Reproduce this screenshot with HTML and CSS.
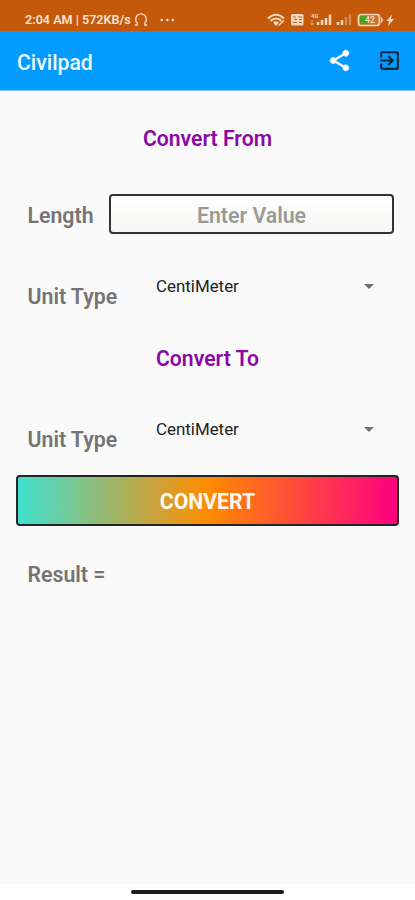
FILE: index.html
```html
<!DOCTYPE html>
<html lang="en">
<head>
<meta charset="utf-8">
<title>Civilpad</title>
<link rel="stylesheet" href="styles.css">
</head>
<body>
<div class="screen">
  <div class="status">
    <span class="clock">2:04 AM | 572KB/s</span>
    <svg class="headset" width="14" height="14" viewBox="0 0 14 14" fill="none" stroke="currentColor" stroke-width="1.3"><path d="M3.2 12V10L1.800 8V6a5.200 5.200 0 0 1 10.400 0v2L10.800 10v2M.8 12h3M10.200 12h3"/></svg>
    <svg class="more" width="15" height="4" viewBox="0 0 15 4" fill="currentColor"><circle cx="1.8" cy="2" r="1.3"/><circle cx="7.3" cy="2" r="1.3"/><circle cx="12.8" cy="2" r="1.3"/></svg>
    <svg class="system" width="130" height="16" viewBox="0 0 130 16">
      <g fill="none" stroke="#f7d8bd" stroke-width="2"><path d="M1 6.500q8-7.500 16 0M3.500 9q5.500-5 11 0"/></g>
      <path d="M6 10.500q3-2.500 6 0l-3 3.500z" fill="#f7d8bd"/><path d="M11.500 13.500l5.500-5" stroke="#f7d8bd" stroke-width="1.500"/>
      <rect x="24" y="2" width="12.500" height="11.500" rx="1.500" fill="#f7d8bd"/>
      <path d="M26 5h3M31 5h4M27 7.500h3M32 7.500h3M26 10.500h4M32 10.500h3" stroke="#b5642e" stroke-width="1.200"/>
      <text x="44" y="6" class="net">4G</text>
      <path d="M45 8v5M43.500 11l1.500 2 1.500-2" stroke="#e3a577" fill="none"/>
      <path d="M51 13v-3M55 13v-5M59 13V6M63 13V2.500" stroke="#f7d8bd" stroke-width="2.500"/>
      <path d="M71 13v-3M75 13v-5" stroke="#f7d8bd" stroke-width="2.500"/>
      <path d="M79 13V5M83 13V2.500" stroke="#d38b58" stroke-width="2.300"/>
      <rect x="91.500" y="2.500" width="21" height="11" rx="2.500" fill="#c2732f" stroke="#f7d8bd" stroke-width="1.700"/>
      <rect x="93" y="4" width="9" height="8" rx="1" fill="#48a51e"/><path d="M114 5q4 3 0 6z" fill="#f7d8bd"/>
      <text x="98" y="11" class="charge">42</text>
      <path d="M125 2.500l-5.500 6.500h2.500l-1 5 6-7h-3z" fill="#f7d8bd"/>
    </svg>
  </div>
  <header class="appbar">
    <h1>Civilpad</h1>
    <svg class="share" width="25" height="25" viewBox="0 0 24 24" fill="#fff"><path d="M18 16.080c-.76 0-1.440.3-1.960.77L8.910 12.700c.05-.23.09-.46.09-.7s-.04-.47-.09-.7l7.050-4.110c.54.5 1.250.81 2.040.81 1.660 0 3-1.340 3-3s-1.340-3-3-3-3 1.340-3 3c0 .24.04.47.09.7L8.040 9.810C7.500 9.310 6.790 9 6 9c-1.660 0-3 1.340-3 3s1.340 3 3 3c.79 0 1.500-.31 2.040-.81l7.120 4.160c-.05.21-.08.43-.08.65 0 1.610 1.310 2.920 2.920 2.920s2.920-1.310 2.920-2.920-1.310-2.920-2.920-2.920z" stroke="#fff" stroke-width=".5"/></svg>
    <svg class="exit" width="25" height="25" viewBox="0 0 24 24" fill="#08243c"><path d="M10.090 15.590L11.500 17l5-5-5-5-1.410 1.410L12.670 11H3v2h9.670l-2.580 2.590zM19 3H5c-1.110 0-2 .9-2 2v4h2V5h14v14H5v-4H3v4c0 1.100.89 2 2 2h14c1.100 0 2-.9 2-2V5c0-1.100-.9-2-2-2z"/></svg>
  </header>
  <main class="content">
    <h2 class="from">Convert From</h2>
    <div class="length">
      <label for="value">Length</label>
      <input id="value" type="text" placeholder="Enter Value">
    </div>
    <div class="unit">
      <span class="label">Unit Type</span>
      <div class="spinner"><span>CentiMeter</span><i class="arrow"></i></div>
    </div>
    <h2 class="to">Convert To</h2>
    <div class="unit">
      <span class="label">Unit Type</span>
      <div class="spinner"><span>CentiMeter</span><i class="arrow"></i></div>
    </div>
    <button class="convert" type="button">CONVERT</button>
    <p class="result">Result =</p>
  </main>
  <div class="navbar"><div class="handle"></div></div>
</div>
</body>
</html>
```

FILE: styles.css
```css
* {
  box-sizing: border-box;
}

body {
  margin: 0;
  font-family: Roboto, "Liberation Sans", sans-serif;
}

.screen {
  display: flex;
  flex-direction: column;
  width: 415px;
  height: 900px;
  background: #fafafa;
}

.status {
  display: flex;
  align-items: center;
  height: 31px;
  padding: 8px 18px 0 25px;
  background: #c4590b;
  color: #fbe3cf;
}

.clock {
  width: 109px;
  font-size: 12.6px;
  font-weight: 600;
  white-space: nowrap;
}

.more {
  margin-left: 12px;
}

.system {
  margin-left: auto;
}

.net {
  font-size: 6px;
  font-weight: 700;
  fill: #f7d8bd;
}

.charge {
  font-size: 8.5px;
  font-weight: 700;
  fill: #f7d8bd;
}

.appbar {
  display: flex;
  align-items: center;
  height: 60px;
  padding: 0 13px 0 17px;
  background: #029bff;
  border-bottom: 1px solid #7ecbfb;
}

h1 {
  margin: 0 auto 0 0;
  padding-top: 4px;
  font-size: 21.2px;
  font-weight: 500;
  line-height: 24px;
  color: #eefaff;
}

.exit {
  margin-left: 25px;
}

.content {
  flex: 1;
  font-size: 21.3px;
  font-weight: 600;
  line-height: 24px;
  color: #757575;
}

h2 {
  margin: 0;
  font-size: 21.2px;
  font-weight: 600;
  text-align: center;
  color: #8b08a5;
}

.from {
  padding-top: 36px;
}

.length {
  display: flex;
  align-items: center;
  height: 40px;
  margin-top: 43px;
  padding: 0 21px 0 27.5px;
}

.length label {
  width: 81.5px;
  padding-top: 3px;
}

.length input {
  flex: 1;
  min-width: 0;
  height: 40px;
  padding: 2px 0 0;
  border: 2px solid #333;
  border-radius: 4px;
  background: linear-gradient(#fff, #f5f7f3);
  font: inherit;
  text-align: center;
}

input::placeholder {
  color: #999b99;
  opacity: 1;
}

.unit {
  display: flex;
  height: 34px;
  margin-top: 40px;
  padding: 0 41px 0 27.5px;
}

.label {
  width: 128.5px;
  padding-top: 11px;
}

.spinner {
  display: flex;
  flex: 1;
  justify-content: space-between;
  align-items: center;
  height: 24px;
  font-size: 16.9px;
  font-weight: 400;
  color: #222;
}

.arrow {
  border: 5px solid transparent;
  border-top-color: #707070;
  border-bottom: 0;
}

.to {
  margin-top: 39px;
}

.to + .unit {
  margin-top: 46px;
}

.convert {
  display: block;
  width: 383px;
  height: 51px;
  margin: 24px 0 0 16px;
  padding: 2px 0 0;
  border: 2px solid #242424;
  border-radius: 4px;
  background: linear-gradient(90deg, #40e0d0, #ff8c00 50%, #ff0080);
  font: 700 21.2px/24px Roboto, sans-serif;
  color: #fffaf0;
}

.result {
  margin: 37px 0 0 27.5px;
}

.navbar {
  display: flex;
  justify-content: center;
  height: 16px;
  padding-top: 6px;
  background: #fff;
}

.handle {
  width: 153px;
  height: 4px;
  border-radius: 2px;
  background: #1c1c20;
}
```
